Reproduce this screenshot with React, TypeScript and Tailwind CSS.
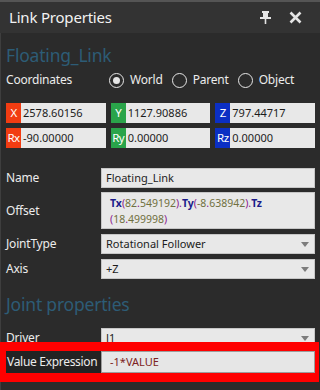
import React from 'react';

type Coord = { label: string; value: string; color: string };

const coordRows: Coord[][] = [
  [
    { label: 'X', value: '2578.60156', color: 'bg-[#f23c12]' },
    { label: 'Y', value: '1127.90886', color: 'bg-[#2aa44a]' },
    { label: 'Z', value: '797.44717', color: 'bg-[#0b2fc4]' },
  ],
  [
    { label: 'Rx', value: '-90.00000', color: 'bg-[#f23c12]' },
    { label: 'Ry', value: '0.00000', color: 'bg-[#2aa44a]' },
    { label: 'Rz', value: '0.00000', color: 'bg-[#0b2fc4]' },
  ],
];

function CoordField({ label, value, color }: Coord) {
  return (
    <div className="flex h-[20px]">
      <div className={`${color} w-[15px] flex items-center justify-center text-[11.5px] leading-none tracking-[-0.5px] text-white`}>
        {label}
      </div>
      <div className="flex-1 bg-[#e8e8e8] flex items-center pl-[2px] text-[11px] text-[#1c1c1c]">{value}</div>
    </div>
  );
}

function Radio({ label, checked }: { label: string; checked?: boolean }) {
  return (
    <div className="flex items-center gap-[6px]">
      <span className="w-[15px] h-[15px] rounded-full border-[1.5px] border-[#e6e6e6] flex items-center justify-center">
        {checked && <span className="w-[7px] h-[7px] rounded-full bg-[#e6e6e6]" />}
      </span>
      <span className="text-[12px] tracking-[-0.2px] text-[#ececec]">{label}</span>
    </div>
  );
}

function Arrow() {
  return (
    <svg width="8" height="5" viewBox="0 0 8 5" className="shrink-0">
      <path d="M0 0 H8 L4 5 Z" fill="#7c7c7c" />
    </svg>
  );
}

function Row({ label, children, className = '' }: { label: string; children: React.ReactNode; className?: string }) {
  return (
    <div className={`flex items-center ${className}`}>
      <div className="w-[95px] text-[12px] tracking-[-0.2px] text-[#ececec] whitespace-nowrap">{label}</div>
      <div className="flex-1">{children}</div>
    </div>
  );
}

function Box({ children, dropdown }: { children: React.ReactNode; dropdown?: boolean }) {
  return (
    <div className="h-[20px] bg-[#e8e8e8] border border-[#c6c6c6] flex items-center pl-[4px] pr-[5px] text-[11px] text-[#1c1c1c]">
      <span className="flex-1">{children}</span>
      {dropdown && <Arrow />}
    </div>
  );
}

const P = ({ c }: { c: string }) => <span className="text-[#8a1a8f]">{c}</span>;
const N = ({ c }: { c: string }) => <span className="text-[#707040]">{c}</span>;
const K = ({ c }: { c: string }) => <span className="font-bold text-[#1b1b8a]">{c}</span>;

export default function App() {
  return (
    <div className="w-[320px] h-[390px] overflow-hidden bg-[#2b2b2b] shadow-[inset_1px_0_0_#3e3e3e] font-['Noto_Sans','Open_Sans',sans-serif]">
      {/* title bar */}
      <div className="h-[33px] border-t-2 border-[#555555] bg-[#333333] flex items-center pl-[9px] pr-[18px]">
        <span className="flex-1 text-[15px] tracking-[-0.2px] text-[#f2f2f2]">Link Properties</span>
        <svg width="11" height="13" viewBox="0 0 11 13" className="mr-[18px]">
          <path d="M2 0 H9 V2 H8 V6 H11 V8 H6.3 V13 H4.7 V8 H0 V6 H3 V2 H2 Z" fill="#e4e4e4" />
        </svg>
        <svg width="13" height="13" viewBox="0 0 13 13">
          <path d="M1.5 1.5 L11.5 11.5 M11.5 1.5 L1.5 11.5" stroke="#e4e4e4" strokeWidth="2.6" />
        </svg>
      </div>

      <div className="pl-[6px] pr-[5px]">
        <div className="mt-[10px] h-[24px] leading-[24px] text-[17.5px] tracking-[-0.2px] text-[#2d5c76]">Floating_Link</div>

        <div className="mt-[3px] h-[20px] flex items-center">
          <span className="w-[103px] text-[12px] tracking-[-0.2px] text-[#ececec]">Coordinates</span>
          <div className="flex items-center gap-[9px]">
            <Radio label="World" checked />
            <Radio label="Parent" />
            <Radio label="Object" />
          </div>
        </div>

        <div className="mt-[13px] flex flex-col gap-[5px]">
          {coordRows.map((row, i) => (
            <div key={i} className="grid grid-cols-3 gap-[5px]">
              {row.map((c) => (
                <CoordField key={c.label} {...c} />
              ))}
            </div>
          ))}
        </div>

        <Row label="Name" className="mt-[20px]">
          <Box>Floating_Link</Box>
        </Row>

        <Row label="Offset" className="mt-[4px]">
          <div className="h-[37px] bg-[#e8e8e8] border border-[#c6c6c6] pl-[8px] pt-[2px] text-[10.5px] leading-[16px] text-[#1c1c1c]">
            <div>
              <K c="Tx" />
              <P c="(" />
              <N c="82" />
              <P c="." />
              <N c="549192" />
              <P c=")." />
              <K c="Ty" />
              <P c="(" />
              <N c="-8" />
              <P c="." />
              <N c="638942" />
              <P c=")." />
              <K c="Tz" />
            </div>
            <div>
              <P c="(" />
              <N c="18" />
              <P c="." />
              <N c="499998" />
              <P c=")" />
            </div>
          </div>
        </Row>

        <Row label="JointType" className="mt-[5px]">
          <Box dropdown>Rotational Follower</Box>
        </Row>

        <Row label="Axis" className="mt-[5px]">
          <Box dropdown>+Z</Box>
        </Row>

        <div className="mt-[13px] h-[24px] leading-[24px] text-[17.5px] tracking-[-0.2px] text-[#2d5c76]">Joint properties</div>

        <Row label="Driver" className="mt-[12px]">
          <Box dropdown>J1</Box>
        </Row>

        {/* highlighted row */}
        <div className="relative z-10 -mt-[6px] -ml-[6px] -mr-[4px] border-[#ff0000] border-l-[6px] border-r-[4px] border-y-[9px] bg-[#232323] flex items-center">
          <div className="w-[95px] pl-[1px] text-[12px] tracking-[-0.3px] text-[#ececec] whitespace-nowrap">Value Expression</div>
          <div className="flex-1 h-[22px] bg-[#e6e6e6] border border-[#9c9c9c] flex items-center pl-[8px] text-[11px] text-[#7d2222]">
            -1*VALUE
          </div>
        </div>
      </div>
    </div>
  );
}
